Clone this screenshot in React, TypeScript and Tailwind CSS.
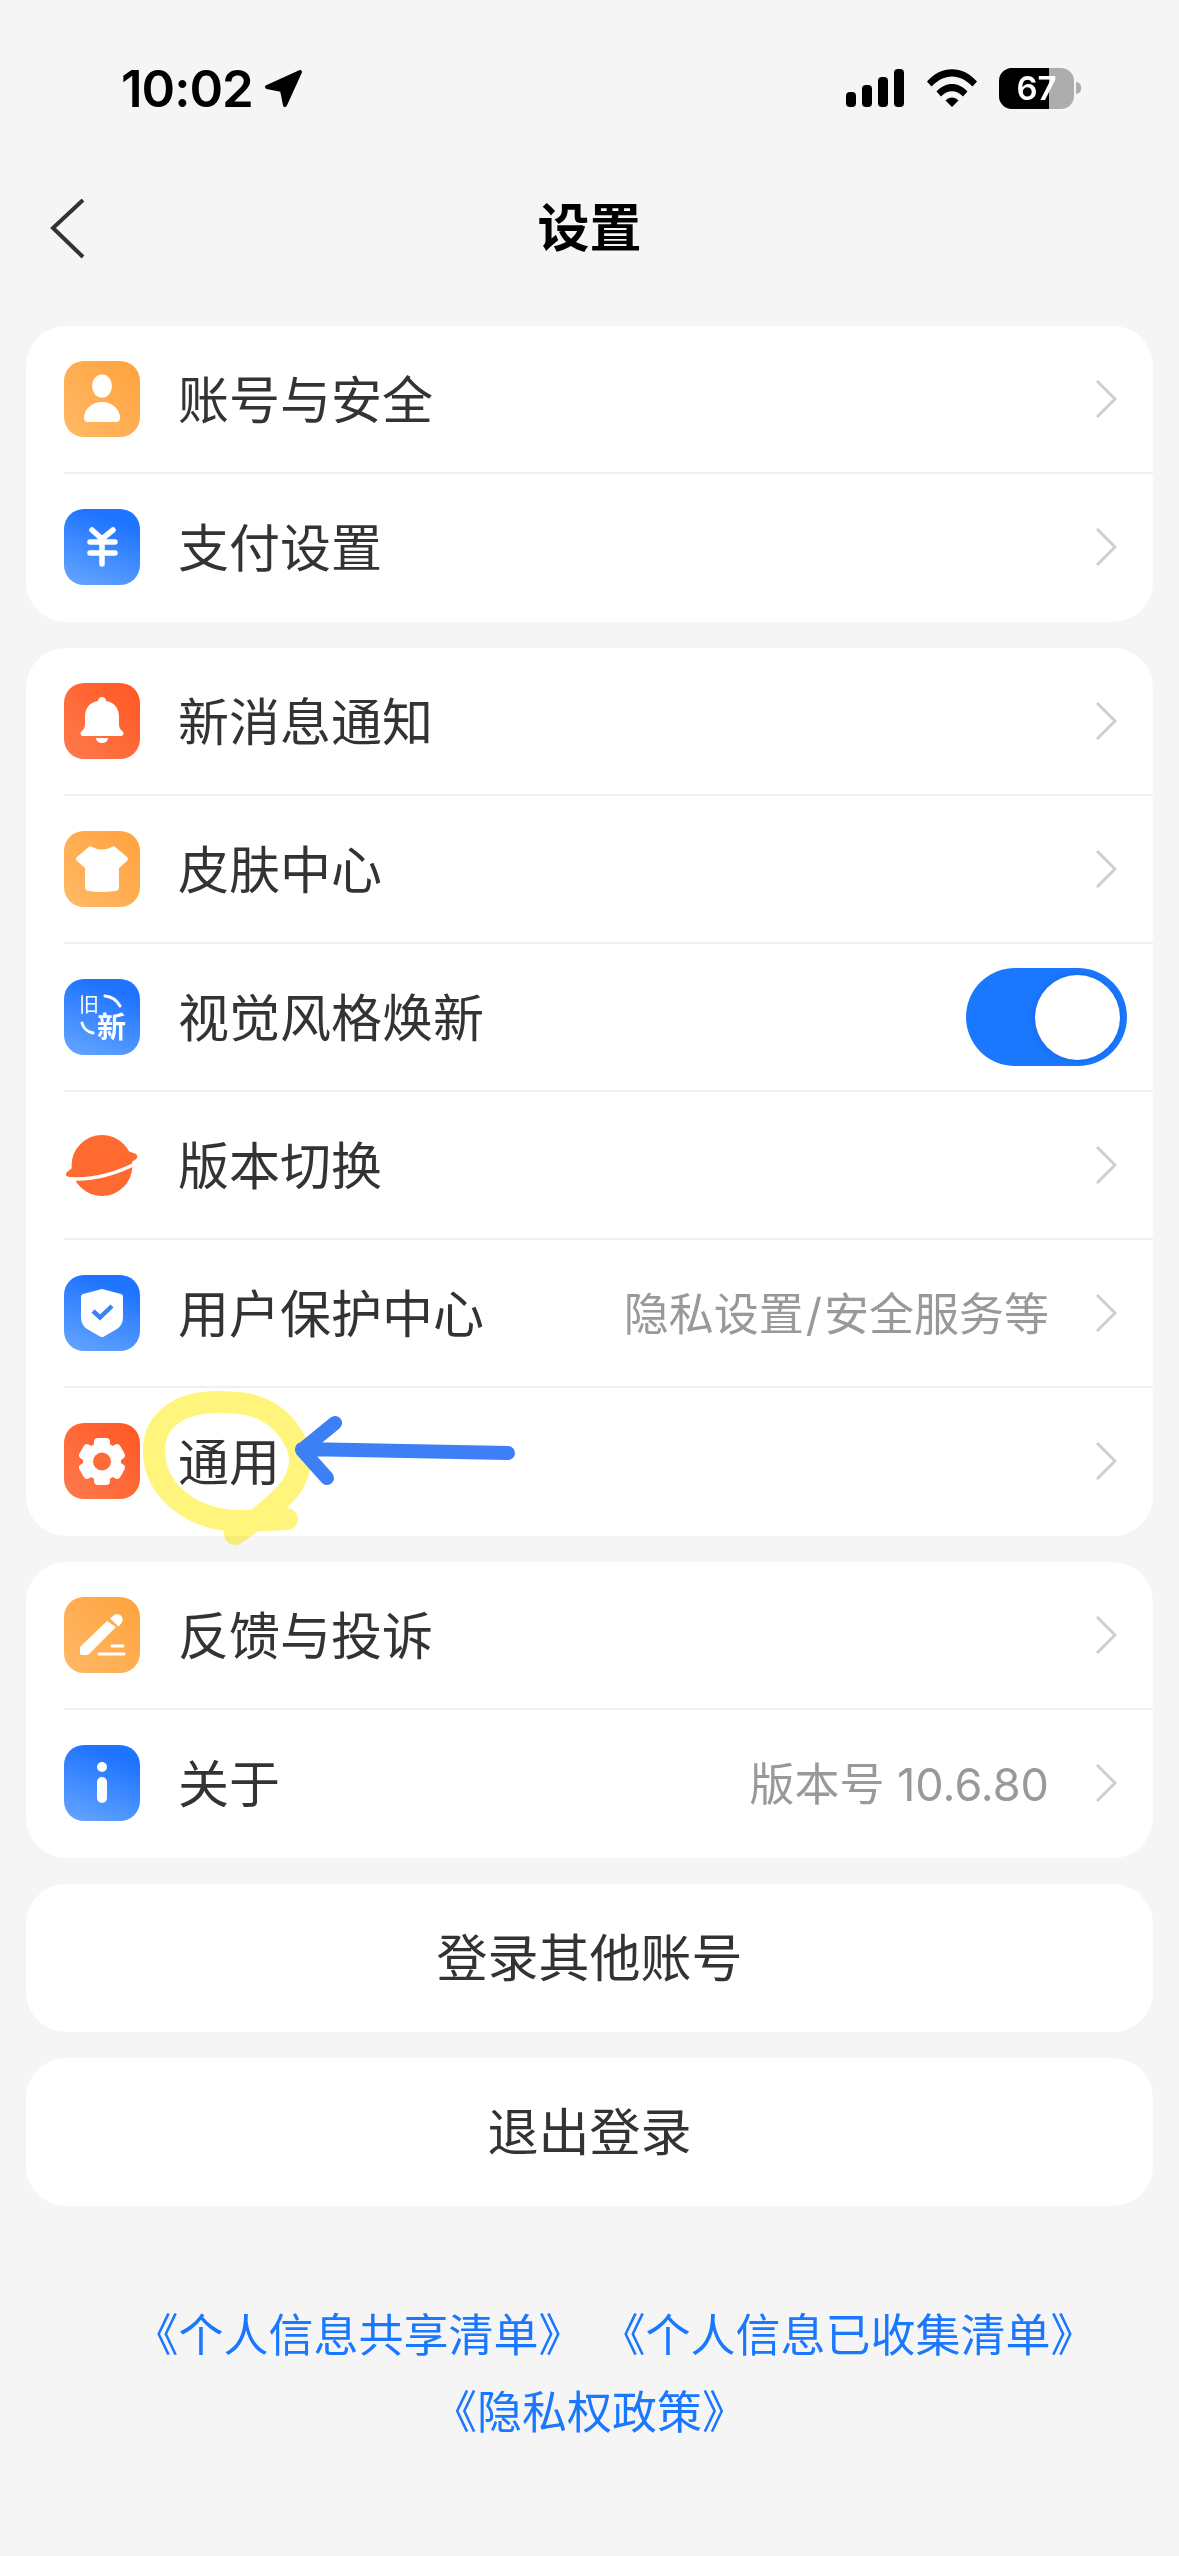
import type { ReactNode } from "react";

const ORANGE = "bg-[linear-gradient(45deg,#ffb965,#ffa23e)]";
const BLUE = "bg-[linear-gradient(200deg,#1f74ff_20%,#66a6ff)]";
const RED = "bg-[linear-gradient(225deg,#ff5722,#ff7a4e)]";

interface RowData {
  label: string;
  bg: string;
  icon: ReactNode;
  value?: ReactNode;
  toggle?: boolean;
}

const PersonIcon = (
  <>
    <ellipse cx="38" cy="25" rx="10" ry="11.5" fill="#fff" />
    <path d="M24 61h28a4 4 0 0 0 4-4c0-9-8-16-18-16s-18 7-18 16a4 4 0 0 0 4 4z" fill="#fff" />
  </>
);

const YenIcon = (
  <g stroke="#fff" strokeWidth="5.5" strokeLinecap="round" fill="none">
    <path d="M28 21l10 9 11-9" />
    <path d="M26 33h25M26 44h25M38 31v24" />
  </g>
);

const BellIcon = (
  <>
    <path
      d="M38 14c2 0 4 1.500 4 4 9 1.500 13 8 13 16v8c0 3 2 5 4 7 1 1 .5 4-2 4H19c-2.500 0-3-3-2-4 2-2 4-4 4-7v-8c0-8 4-14.500 13-16 0-2.500 2-4 4-4z"
      fill="#fff"
    />
    <path d="M32 55h12c0 3-3 5-6 5s-6-2-6-5z" fill="#fff" />
  </>
);

const ShirtIcon = (
  <path
    d="M26 15q12 7 24 0l13 11q2 2 0 4l-8 7v19q0 4-4 4-13 2-26 0-4 0-4-4V37l-8-7q-2-2 0-4z"
    fill="#fff"
  />
);

const OldNewIcon = (
  <>
    <text x="15" y="33" fontSize="20" fill="#fff" fontFamily="Noto Sans CJK SC, sans-serif">
      旧
    </text>
    <text x="33" y="59" fontSize="29" fontWeight="700" fill="#fff" fontFamily="Noto Sans CJK SC, sans-serif">
      新
    </text>
    <path d="M41 17q10 1 15 10" stroke="#fff" strokeWidth="3" fill="none" strokeLinecap="round" />
    <path d="M18 44q2 8 11 10" stroke="#fff" strokeWidth="3" fill="none" strokeLinecap="round" />
  </>
);

const PlanetIcon = (
  <>
    <circle cx="38" cy="38.500" r="30.500" fill="#ff6a30" />
    <path d="M12 38L3 45q-3 4 2 5l16 0z" fill="#ff6a30" />
    <path d="M64 24l8 3q3 3-1 6L58 40z" fill="#ff6a30" />
    <path d="M2 51.500Q36 55 73 36" stroke="#fff" strokeWidth="3.500" fill="none" />
  </>
);

const ShieldIcon = (
  <>
    <path
      d="M38 14l19 5q2 .5 2 3v20q0 8-6 12l-13 7.500q-2 1-4 0L23 54q-6-4-6-12V22q0-2.500 2-3z"
      fill="#fff"
    />
    <path d="M29 36l7 6.500L48 31" stroke="#3b82f6" strokeWidth="4.500" fill="none" />
  </>
);

const GearIcon = (
  <>
    <circle cx="38" cy="38.500" r="19" fill="#fff" />
    {[0, 60, 120, 180, 240, 300].map((deg) => (
      <rect
        key={deg}
        x="30"
        y="15"
        width="16"
        height="12"
        rx="4"
        fill="#fff"
        transform={`rotate(${deg} 38 38.500)`}
      />
    ))}
    <circle cx="38" cy="38.500" r="9" fill="#ff6a35" />
  </>
);

const PencilIcon = (
  <>
    <path d="M16 50l27-26 9 6-28 28h-6q-2 0-2-2z" fill="#fff" />
    <path d="M46 21.500l3.500-3a5.500 5.500 0 0 1 8 7.500l-3 3.500z" fill="#fff" />
    <path d="M48 49h11M35 57h25" stroke="#fff" strokeWidth="3" strokeLinecap="round" />
  </>
);

const InfoIcon = (
  <>
    <circle cx="38" cy="22" r="5" fill="#fff" />
    <rect x="33" y="32" width="10" height="26" rx="5" fill="#fff" />
  </>
);

const GROUP_ONE: RowData[] = [
  { label: "账号与安全", bg: ORANGE, icon: PersonIcon },
  { label: "支付设置", bg: BLUE, icon: YenIcon },
];

const GROUP_TWO: RowData[] = [
  { label: "新消息通知", bg: RED, icon: BellIcon },
  { label: "皮肤中心", bg: ORANGE, icon: ShirtIcon },
  { label: "视觉风格焕新", bg: BLUE, icon: OldNewIcon, toggle: true },
  { label: "版本切换", bg: "", icon: PlanetIcon },
  {
    label: "用户保护中心",
    bg: BLUE,
    icon: ShieldIcon,
    value: (
      <>
        隐私设置<span className="mx-[2px]">/</span>安全服务等
      </>
    ),
  },
  { label: "通用", bg: RED, icon: GearIcon },
];

const GROUP_THREE: RowData[] = [
  { label: "反馈与投诉", bg: ORANGE, icon: PencilIcon },
  { label: "关于", bg: BLUE, icon: InfoIcon, value: "版本号 10.6.80" },
];

const Chevron = () => (
  <svg width="22" height="38" viewBox="0 0 22 38" fill="none" className="ml-[46px] shrink-0">
    <path d="M2 1l18 18L2 37" stroke="#cfcfcf" strokeWidth="3" />
  </svg>
);

const Toggle = () => (
  <div className="flex h-[98px] w-[161px] items-center justify-end rounded-full bg-[#1a78ff] pr-[7px]">
    <div className="h-[85px] w-[85px] rounded-full bg-white shadow-[0_0_6px_rgba(0,40,120,0.25)]" />
  </div>
);

const Row = ({ row, last }: { row: RowData; last: boolean }) => (
  <div
    className={
      last
        ? "ml-[38px] flex h-[148px] items-center pb-[2px]"
        : "ml-[38px] flex h-[148px] items-center border-b-2 border-[#f0f0f0]"
    }
  >
    <div className={`flex h-[76px] w-[76px] shrink-0 items-center justify-center rounded-[20px] ${row.bg}`}>
      <svg width="76" height="76" viewBox="0 0 76 76">
        {row.icon}
      </svg>
    </div>
    <span className="ml-[38px] mt-[2px] text-[51px] leading-none text-[#333333]">{row.label}</span>
    <div className="flex-1" />
    {row.value && <span className="mt-[2px] text-[45px] leading-none text-[#999999]">{row.value}</span>}
    {row.toggle ? (
      <div className="pr-[26px]">
        <Toggle />
      </div>
    ) : (
      <div className="pr-[36px]">
        <Chevron />
      </div>
    )}
  </div>
);

const Card = ({ rows }: { rows: RowData[] }) => (
  <div className="mx-[26px] mb-[26px] overflow-hidden rounded-[40px] bg-white">
    {rows.map((row, i) => (
      <Row key={row.label} row={row} last={i === rows.length - 1} />
    ))}
  </div>
);

const ActionButton = ({ label }: { label: string }) => (
  <div className="mx-[26px] mb-[26px] flex h-[148px] items-center justify-center rounded-[40px] bg-white text-[51px] leading-none text-[#333333]">
    {label}
  </div>
);

const StatusBar = () => (
  <div className="flex h-[168px] items-start justify-between pl-[121px] pr-[98px] pt-[68px]">
    <div className="flex h-[40px] items-center">
      <span className="text-[51px] font-semibold leading-none tracking-[-1px] text-black">10:02</span>
      <svg width="40" height="39" viewBox="0 0 40 39" className="ml-[11px]">
        <path d="M36 3L3 18l15 3 3 15z" fill="#000" stroke="#000" strokeWidth="4" strokeLinejoin="round" />
      </svg>
    </div>
    <div className="flex h-[40px] items-center">
      <svg width="58" height="38" viewBox="0 0 58 38" fill="#000">
        <rect x="0" y="23" width="10" height="15" rx="4" />
        <rect x="16" y="16" width="10" height="22" rx="4" />
        <rect x="32" y="8" width="10" height="30" rx="4" />
        <rect x="48" y="0" width="10" height="38" rx="4" />
      </svg>
      <svg width="50" height="38" viewBox="0 0 50 38" className="ml-[23px]">
        <path d="M0 12.500C14-4 36-4 50 12.500l-4.500 5C33 4 17 4 4.500 17.500z" fill="#000" />
        <path d="M9.500 22.500c9-10 22-10 31 0l-4.500 5c-6.500-7-15.500-7-22 0z" fill="#000" />
        <path d="M18.500 31.500c4-4 9-4 13 0L25 38z" fill="#000" />
      </svg>
      <div className="relative ml-[22px] flex h-[41px] w-[75px] items-center justify-center overflow-hidden rounded-[13px] bg-[#adadad]">
        <div className="absolute inset-y-0 left-0 w-[50px] bg-black" />
        <span className="relative text-[33px] font-semibold leading-none text-white">67</span>
      </div>
      <div className="ml-[2px] h-[12px] w-[5px] rounded-r-full bg-[#adadad]" />
    </div>
  </div>
);

const NavBar = () => (
  <div className="relative mb-[38px] flex h-[120px] items-center justify-center">
    <svg width="36" height="60" viewBox="0 0 36 60" fill="none" className="absolute left-[50px] top-[31px]">
      <path d="M33 1L3 29l30 29" stroke="#333333" strokeWidth="4" />
    </svg>
    <span className="mt-[2px] text-[52px] font-bold leading-none text-black">设置</span>
  </div>
);

const Annotation = () => (
  <>
    <svg width="1179" height="2556" className="pointer-events-none absolute left-0 top-0 mix-blend-multiply">
      <path
        d="M287 1519L240 1521C190 1520 154 1490 154 1450 154 1420 180 1402 217 1402 245 1402 258 1405 273 1415 290 1428 300 1445 300 1460 300 1485 280 1500 262 1515L235 1534"
        stroke="#fff57c"
        strokeWidth="22"
        strokeLinecap="round"
        strokeLinejoin="round"
        fill="none"
      />
    </svg>
    <svg width="1179" height="2556" className="pointer-events-none absolute left-0 top-0">
      <path
        d="M335 1423L302 1450 327 1478M302 1449L508 1453"
        stroke="#3d7ff5"
        strokeWidth="14"
        strokeLinecap="round"
        strokeLinejoin="round"
        fill="none"
      />
    </svg>
  </>
);

export default function App() {
  return (
    <div className="relative h-[2556px] w-[1179px] overflow-hidden bg-[#f5f5f5] font-['Inter','Noto_Sans_CJK_SC',sans-serif]">
      <StatusBar />
      <NavBar />
      <Card rows={GROUP_ONE} />
      <Card rows={GROUP_TWO} />
      <Card rows={GROUP_THREE} />
      <ActionButton label="登录其他账号" />
      <ActionButton label="退出登录" />
      <div className="mt-[91px] text-center text-[45px] leading-[77px] text-[#1a78ff]">
        <div className="flex justify-center gap-[17px] pl-[50px]">
          <span>《个人信息共享清单》</span>
          <span>《个人信息已收集清单》</span>
        </div>
        <div>《隐私权政策》</div>
      </div>
      <Annotation />
    </div>
  );
}
